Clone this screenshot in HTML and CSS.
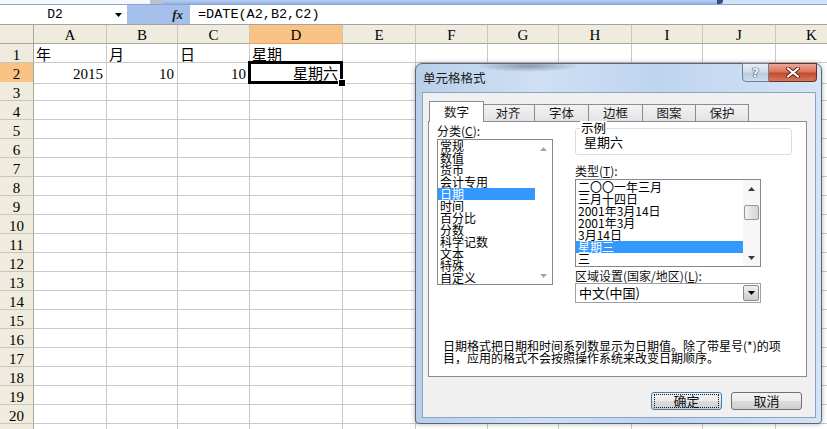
FILE: index.html
```html
<!DOCTYPE html>
<html lang="zh-CN">
<head>
<meta charset="utf-8">
<title>单元格格式</title>
<link rel="stylesheet" href="styles.css">
</head>
<body>
<div class="app">
  <div class="topstrip"><span class="ts-white"></span><span class="ts-gray"></span><span class="ts-blue"></span><span class="ts-nub"></span><span class="ts-light"></span></div>
  <div class="fbar">
    <div class="namebox">D2</div>
    <div class="nbdrop"><svg width="7" height="4" viewBox="0 0 7 4"><polygon points="0,0 7,0 3.5,4" fill="#000"/></svg></div>
    <div class="fxzone"><span class="fx">fx</span></div>
    <div class="formula">=DATE(A2,B2,C2)</div>
  </div>
  <div class="sheet">
    <div class="row"><span class="corner"></span><span class="ch">A</span><span class="ch">B</span><span class="ch">C</span><span class="ch on">D</span><span class="ch">E</span><span class="ch">F</span><span class="ch">G</span><span class="ch">H</span><span class="ch">I</span><span class="ch">J</span><span class="ch">K</span></div>
    <div class="row"><span class="rh">1</span><span>年</span><span>月</span><span>日</span><span>星期</span><span></span><span></span><span></span><span></span><span></span><span></span><span></span></div>
    <div class="row"><span class="rh on">2</span><span class="num">2015</span><span class="num">10</span><span class="num">10</span><span class="num sel">星期六</span><span></span><span></span><span></span><span></span><span></span><span></span><span></span></div>
    <div class="row"><span class="rh">3</span><span></span><span></span><span></span><span></span><span></span><span></span><span></span><span></span><span></span><span></span><span></span></div>
    <div class="row"><span class="rh">4</span><span></span><span></span><span></span><span></span><span></span><span></span><span></span><span></span><span></span><span></span><span></span></div>
    <div class="row"><span class="rh">5</span><span></span><span></span><span></span><span></span><span></span><span></span><span></span><span></span><span></span><span></span><span></span></div>
    <div class="row"><span class="rh">6</span><span></span><span></span><span></span><span></span><span></span><span></span><span></span><span></span><span></span><span></span><span></span></div>
    <div class="row"><span class="rh">7</span><span></span><span></span><span></span><span></span><span></span><span></span><span></span><span></span><span></span><span></span><span></span></div>
    <div class="row"><span class="rh">8</span><span></span><span></span><span></span><span></span><span></span><span></span><span></span><span></span><span></span><span></span><span></span></div>
    <div class="row"><span class="rh">9</span><span></span><span></span><span></span><span></span><span></span><span></span><span></span><span></span><span></span><span></span><span></span></div>
    <div class="row"><span class="rh">10</span><span></span><span></span><span></span><span></span><span></span><span></span><span></span><span></span><span></span><span></span><span></span></div>
    <div class="row"><span class="rh">11</span><span></span><span></span><span></span><span></span><span></span><span></span><span></span><span></span><span></span><span></span><span></span></div>
    <div class="row"><span class="rh">12</span><span></span><span></span><span></span><span></span><span></span><span></span><span></span><span></span><span></span><span></span><span></span></div>
    <div class="row"><span class="rh">13</span><span></span><span></span><span></span><span></span><span></span><span></span><span></span><span></span><span></span><span></span><span></span></div>
    <div class="row"><span class="rh">14</span><span></span><span></span><span></span><span></span><span></span><span></span><span></span><span></span><span></span><span></span><span></span></div>
    <div class="row"><span class="rh">15</span><span></span><span></span><span></span><span></span><span></span><span></span><span></span><span></span><span></span><span></span><span></span></div>
    <div class="row"><span class="rh">16</span><span></span><span></span><span></span><span></span><span></span><span></span><span></span><span></span><span></span><span></span><span></span></div>
    <div class="row"><span class="rh">17</span><span></span><span></span><span></span><span></span><span></span><span></span><span></span><span></span><span></span><span></span><span></span></div>
    <div class="row"><span class="rh">18</span><span></span><span></span><span></span><span></span><span></span><span></span><span></span><span></span><span></span><span></span><span></span></div>
    <div class="row"><span class="rh">19</span><span></span><span></span><span></span><span></span><span></span><span></span><span></span><span></span><span></span><span></span><span></span></div>
    <div class="row"><span class="rh">20</span><span></span><span></span><span></span><span></span><span></span><span></span><span></span><span></span><span></span><span></span><span></span></div>
    <div class="row"><span class="rh"></span><span></span><span></span><span></span><span></span><span></span><span></span><span></span><span></span><span></span><span></span><span></span></div>
  </div>

  <div class="dlg">
    <div class="dlg-title">
      <span class="caption">单元格格式</span>
      <div class="capbtns">
        <div class="cb-help">?</div>
        <div class="cb-close"><svg width="14" height="11" viewBox="0 0 14 11"><path d="M2 1.5 L12 9.5 M12 1.5 L2 9.5" stroke="#5a2418" stroke-width="4" stroke-linecap="round"/><path d="M2 1.5 L12 9.5 M12 1.5 L2 9.5" stroke="#fff" stroke-width="2.2" stroke-linecap="round"/></svg></div>
      </div>
    </div>
    <div class="client">
      <div class="tabs">
        <div class="tab active">数字</div>
        <div class="tab w54">对齐</div>
        <div class="tab w55">字体</div>
        <div class="tab w55">边框</div>
        <div class="tab w54">图案</div>
        <div class="tab w54">保护</div>
      </div>
      <div class="panel">
        <div class="cols">
          <div class="col-left">
            <div class="lbl">分类(<u>C</u>):</div>
            <div class="listbox cat">
              <div class="items">
                <div class="it">常规</div>
                <div class="it">数值</div>
                <div class="it">货币</div>
                <div class="it">会计专用</div>
                <div class="it hl">日期</div>
                <div class="it">时间</div>
                <div class="it">百分比</div>
                <div class="it">分数</div>
                <div class="it">科学记数</div>
                <div class="it">文本</div>
                <div class="it">特殊</div>
                <div class="it">自定义</div>
              </div>
              <div class="vs">
                <div class="arr"><svg width="7" height="4" viewBox="0 0 7 4"><polygon points="0,4 7,4 3.5,0" fill="#a6a6a6"/></svg></div>
                <div class="arr"><svg width="7" height="4" viewBox="0 0 7 4"><polygon points="0,0 7,0 3.5,4" fill="#a6a6a6"/></svg></div>
              </div>
            </div>
          </div>
          <div class="col-right">
            <div class="sample">
              <span class="legend">示例</span>
              <div class="sample-text">星期六</div>
            </div>
            <div class="lbl lbl-type">类型(<u>T</u>):</div>
            <div class="listbox type">
              <div class="items">
                <div class="it">二〇〇一年三月</div>
                <div class="it">三月十四日</div>
                <div class="it">2001年3月14日</div>
                <div class="it">2001年3月</div>
                <div class="it">3月14日</div>
                <div class="it hl">星期三</div>
                <div class="it">三</div>
              </div>
              <div class="vs">
                <div class="arr"><svg width="7" height="4" viewBox="0 0 7 4"><polygon points="0,4 7,4 3.5,0" fill="#3a3a3a"/></svg></div>
                <div class="thumb"></div>
                <div class="spacer"></div>
                <div class="arr"><svg width="7" height="4" viewBox="0 0 7 4"><polygon points="0,0 7,0 3.5,4" fill="#3a3a3a"/></svg></div>
              </div>
            </div>
            <div class="lbl lbl-region">区域设置(国家/地区)(<u>L</u>):</div>
            <div class="combo">
              <span class="combo-text">中文(中国)</span>
              <span class="combo-btn"><svg width="7" height="4" viewBox="0 0 7 4"><polygon points="0,0 7,0 3.5,4" fill="#000"/></svg></span>
            </div>
          </div>
        </div>
        <p class="desc">日期格式把日期和时间系列数显示为日期值。除了带星号(*)的项<br>目，应用的格式不会按照操作系统来改变日期顺序。</p>
      </div>
      <div class="btnrow">
        <button class="btn def"><span class="focus">确定</span></button>
        <button class="btn">取消</button>
      </div>
    </div>
  </div>
</div>
</body>
</html>
```

FILE: styles.css
```css
* { box-sizing: border-box; margin: 0; padding: 0; }
body {
  margin: 0;
  width: 827px;
  height: 429px;
  overflow: hidden;
  background: #fff;
  font-family: "Liberation Serif", "Noto Sans CJK SC", serif;
  color: #000;
}
.app { position: relative; width: 827px; height: 429px; overflow: hidden; }

/* top toolbar remnant */
.topstrip { height: 5px; display: flex; border-bottom: 1px solid #8aa6d4; background: #a8c1e9; }
.ts-white { width: 150px; background: #f6f8fc; }
.ts-gray { width: 12px; background: #b8c2d2; }
.ts-blue { width: 555px; background: linear-gradient(#b7cdef, #94b3e3); }
.ts-nub { width: 6px; background: #2d4f8c; border-radius: 0 0 4px 0; }
.ts-light { flex: 1; background: #d3e2f6; }

/* formula bar */
.fbar { display: flex; height: 20px; border-bottom: 1px solid #a3a3a3; background: #fff; }
.namebox { width: 110px; text-align: center; font: 13px/20px "Liberation Mono", monospace; }
.nbdrop { width: 17px; display: flex; align-items: center; justify-content: center; padding-top: 1px; }
.fxzone { width: 63px; background: #a6c0ec; display: flex; align-items: center; justify-content: flex-end; padding-right: 7px; }
.fx { font: italic bold 13px/20px "Liberation Serif", serif; color: #1a1a1a; }
.formula { flex: 1; padding-left: 8px; font: 13.5px/20px "Liberation Mono", monospace; white-space: nowrap; }

/* sheet */
.row {
  display: grid;
  grid-template-columns: 34px 73px 71px 72px 93px 73px 72px 71px 73px 71px 73px 72px;
  height: 19px;
}
.row > span {
  display: block;
  border-right: 1px solid #c9c9c9;
  border-bottom: 1px solid #c9c9c9;
  padding: 2px 2px 0;
  font-size: 15px;
  line-height: 18px;
  white-space: nowrap;
  overflow: hidden;
}
.row > .corner { background: #efebde; border-right-color: #a9a69a; border-bottom-color: #a9a69a; }
.row > .ch {
  background: #efebde;
  border-right-color: #cbc7b7;
  border-bottom-color: #a9a69a;
  text-align: center;
  padding-top: 1px;
}
.row > .rh {
  background: #efebde;
  border-right-color: #a9a69a;
  border-bottom-color: #cbc7b7;
  text-align: center;
  padding: 2px 0 0;
}
.row > .on { background: #f9c385; border-bottom-color: #e8a760; }
.row > .num { text-align: right; padding-right: 3px; }
.row > .sel { position: relative; overflow: visible; padding-right: 4px; }
.sel::before {
  content: "";
  position: absolute;
  left: -2px; top: -2px; right: -1px; bottom: -1px;
  border: 3px solid #000;
}
.sel::after {
  content: "";
  position: absolute;
  right: -4px; bottom: -4px;
  width: 6px; height: 6px;
  background: #000;
  border: 1px solid #fff;
}

/* dialog */
.dlg {
  position: absolute;
  left: 415px; top: 63px;
  width: 407px; height: 361px;
  border: 1px solid #56667c;
  border-radius: 7px 7px 4px 4px;
  background: linear-gradient(90deg, #b9cfe9 0%, #cfe0f4 30%, #bed4ee 60%, #d5e4f6 100%);
  box-shadow: 0 0 5px rgba(0, 0, 0, 0.3);
  display: flex;
  flex-direction: column;
  font-family: "Noto Sans CJK SC", sans-serif;
}
.dlg-title {
  height: 28px;
  display: flex;
  align-items: center;
  padding-left: 7px;
  border-radius: 6px 6px 0 0;
  background: radial-gradient(ellipse 52px 6px at 112px 2px, rgba(55, 65, 85, 0.45), rgba(55, 65, 85, 0));
}
.caption { font-size: 12.5px; line-height: 16px; color: #1c1c1c; }
.capbtns { margin-left: auto; margin-right: 4px; align-self: flex-start; margin-top: -1px; display: flex; }
.cb-help {
  width: 27px; height: 19px;
  border: 1px solid #6f7f95;
  border-radius: 0 0 0 4px;
  background: linear-gradient(#e6eef7 0%, #cfdcec 48%, #b9cbe1 52%, #cddcee 100%);
  text-align: center;
  font: bold 13px/17px "DejaVu Sans", sans-serif;
  color: #f4f6f9;
  text-shadow: 0 0 1px #3d4654, 0 0 1px #3d4654, 0 0 1px #3d4654;
}
.cb-close {
  width: 48px; height: 19px;
  border: 1px solid #6b2c22;
  border-left: none;
  border-radius: 0 0 4px 0;
  background: linear-gradient(#eaa896 0%, #d9765e 45%, #c44a2f 55%, #d47a5c 100%);
  display: flex; align-items: center; justify-content: center;
}
.client {
  flex: 1;
  margin: 0 5px 5px 6px;
  background: #f0f0f0;
  border: 1px solid #8ea3bd;
  padding-top: 8px;
}

/* tabs */
.tabs { display: flex; align-items: flex-end; height: 20px; margin-left: 6px; position: relative; z-index: 1; }
.tab {
  height: 17px;
  margin-left: -1px;
  border: 1px solid #898c95;
  border-bottom: none;
  background: linear-gradient(#f3f3f3, #e3e3e3);
  font-size: 12.5px;
  line-height: 16px;
  text-align: center;
  color: #1a1a1a;
}
.tab.active {
  width: 55px;
  height: 21px;
  margin-left: 0;
  margin-right: -2px;
  margin-bottom: -1px;
  background: #fff;
  line-height: 19px;
  position: relative;
  z-index: 2;
}
.w54 { width: 54px; }
.w55 { width: 55px; }

.panel {
  width: 379px; height: 256px;
  margin-left: 5px;
  border: 1px solid #898c95;
  background: #fff;
  padding-left: 8px;
}
.cols { display: flex; gap: 22px; }
.col-left { width: 116px; }
.col-right { width: 217px; }
.lbl { height: 17px; font-size: 12px; line-height: 17px; white-space: nowrap; color: #111; }
.lbl u { text-decoration: underline; }
.lbl-type { height: 24px; padding-top: 8px; line-height: 16px; }
.lbl-region { height: 16px; padding-top: 2px; line-height: 14px; }

.listbox { display: flex; border: 1px solid #828790; background: #fff; overflow: hidden; }
.cat { width: 116px; height: 146px; }
.type { width: 186px; height: 88px; }
.type .items { padding-top: 1px; }
.items { flex: 1; overflow: hidden; }
.it { height: 12px; line-height: 12px; font-size: 12px; padding-left: 2px; white-space: nowrap; color: #000; }
.it.hl { background: #3399ff; color: #fff; }
.vs { width: 17px; display: flex; flex-direction: column; justify-content: space-between; background: #fff; }
.arr { height: 17px; display: flex; align-items: center; justify-content: center; }
.type .vs { justify-content: flex-start; background: #f7f7f7; }
.thumb {
  height: 15px;
  margin: 8px 1px 0;
  border: 1px solid #979797;
  border-radius: 2px;
  background: linear-gradient(90deg, #f4f4f4, #e2e2e2 50%, #d6d6d6);
}
.spacer { flex: 1; }

.sample {
  position: relative;
  margin-top: 6px;
  height: 27px;
  border: 1px solid #d5dfe5;
  border-radius: 3px;
  padding: 6px 0 0 8px;
}
.legend {
  position: absolute;
  left: 4px; top: -8px;
  padding: 0 1px;
  background: #fff;
  font-size: 12.5px;
  line-height: 14px;
}
.sample-text { font-size: 13px; line-height: 14px; }

.combo {
  width: 186px; height: 20px;
  border: 1px solid #9da1a8;
  display: flex; align-items: center;
  background: #fff;
}
.combo-text { flex: 1; padding-left: 3px; font-size: 13px; line-height: 16px; white-space: nowrap; }
.combo-btn {
  width: 16px; height: 16px;
  margin-right: 1px;
  border: 1px solid #8a8a8a;
  border-radius: 2px;
  background: linear-gradient(#f2f2f2, #dcdcdc 50%, #cdcdcd);
  display: flex; align-items: center; justify-content: center;
}

.desc {
  margin-top: 37px;
  padding-left: 6px;
  font-size: 12px;
  line-height: 12px;
  white-space: nowrap;
  color: #000;
}

/* buttons */
.btnrow { display: flex; justify-content: flex-end; gap: 9px; margin-top: 15px; padding-right: 13px; }
.btn {
  width: 71px; height: 18px;
  border: 1px solid #707070;
  border-radius: 3px;
  background: linear-gradient(#f3f3f3 0%, #ebebeb 48%, #dcdcdc 52%, #cfcfcf 100%);
  font: 13px/16px "Noto Sans CJK SC", sans-serif;
  color: #111;
  padding: 0;
}
.btn.def { border-color: #3c7fb1; }
.focus {
  display: block;
  margin: 1px 2px;
  height: 14px;
  border: 1px dotted #1a1a1a;
  line-height: 12px;
}
```
